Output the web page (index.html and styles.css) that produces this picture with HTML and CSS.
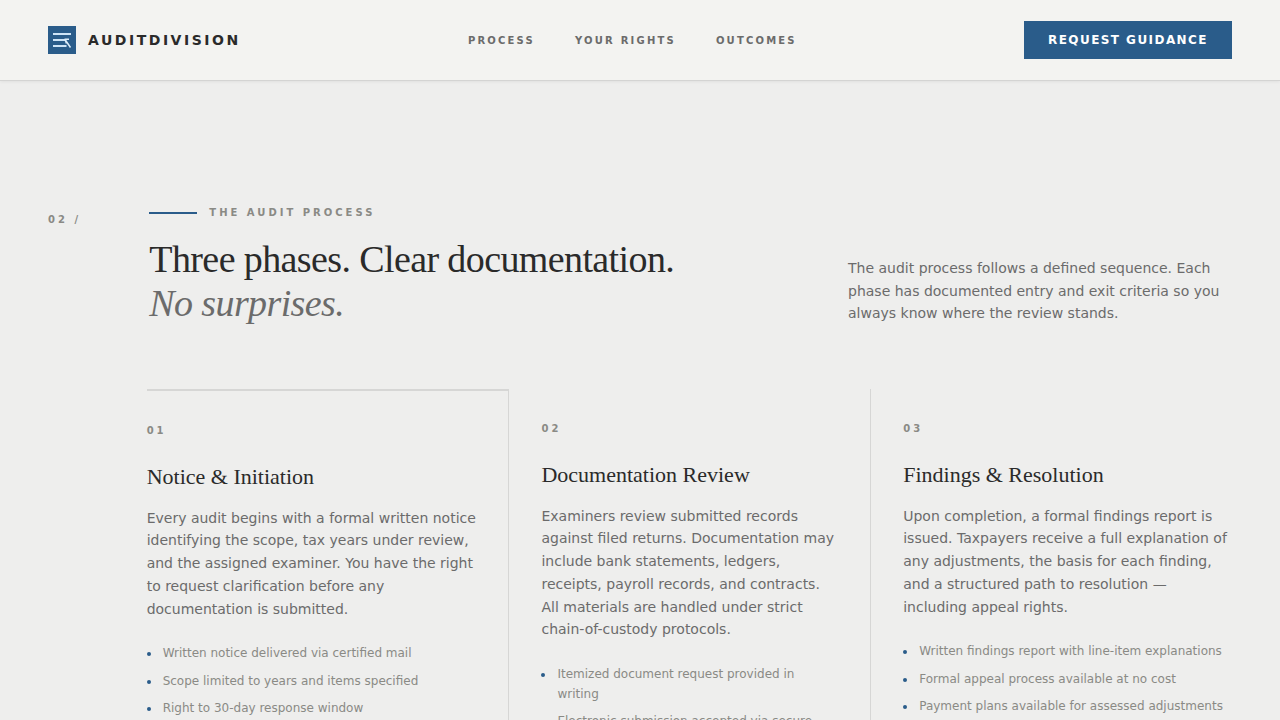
FILE: index.html
```html
<!DOCTYPE html>
<html lang="en">
<head>
    <meta charset="UTF-8">
    <meta name="viewport" content="width=device-width, initial-scale=1.0">
    <title>AuditDivision</title>
    <link rel="stylesheet" href="styles.css">
</head>
<body>
    <header class="site-header">
        <a class="logo" href="#">
            <svg class="logo-mark" viewBox="0 0 28 28" fill="none" aria-hidden="true">
                <rect width="28" height="28" fill="#2a5c8a"/>
                <path d="M5 8h18M5 14h12M5 20h13.5" stroke="#cfe4f6" stroke-width="1.8"/>
                <path d="M22.5 21.5L17 13.5M16.5 13.3H21M17 13.5L18.5 17.5" stroke="#dcecf9" stroke-width="1.5"/>
            </svg>
            <span class="logo-text">AUDITDIVISION</span>
        </a>
        <nav class="site-nav">
            <a href="#process">PROCESS</a>
            <a href="#rights">YOUR RIGHTS</a>
            <a href="#outcomes">OUTCOMES</a>
        </nav>
        <button class="btn" type="button">REQUEST GUIDANCE</button>
    </header>

    <main>
        <section class="process" id="process">
            <div class="process-head">
                <span class="section-num">02 /</span>
                <div class="process-title">
                    <div class="eyebrow">THE AUDIT PROCESS</div>
                    <h2>Three phases. Clear documentation.<br><em>No surprises.</em></h2>
                </div>
                <p class="process-intro">The audit process follows a defined sequence. Each phase has documented entry and exit criteria so you always know where the review stands.</p>
            </div>

            <div class="phases">
                <article class="phase phase-active">
                    <div class="phase-num">01</div>
                    <h3>Notice &amp; Initiation</h3>
                    <p>Every audit begins with a formal written notice identifying the scope, tax years under review, and the assigned examiner. You have the right to request clarification before any documentation is submitted.</p>
                    <ul>
                        <li>Written notice delivered via certified mail</li>
                        <li>Scope limited to years and items specified</li>
                        <li>Right to 30-day response window</li>
                    </ul>
                </article>
                <article class="phase">
                    <div class="phase-num">02</div>
                    <h3>Documentation Review</h3>
                    <p>Examiners review submitted records against filed returns. Documentation may include bank statements, ledgers, receipts, payroll records, and contracts. All materials are handled under strict chain-of-custody protocols.</p>
                    <ul>
                        <li>Itemized document request provided in writing</li>
                        <li>Electronic submission accepted via secure</li>
                    </ul>
                </article>
                <article class="phase">
                    <div class="phase-num">03</div>
                    <h3>Findings &amp; Resolution</h3>
                    <p>Upon completion, a formal findings report is issued. Taxpayers receive a full explanation of any adjustments, the basis for each finding, and a structured path to resolution — including appeal rights.</p>
                    <ul>
                        <li>Written findings report with line-item explanations</li>
                        <li>Formal appeal process available at no cost</li>
                        <li>Payment plans available for assessed adjustments</li>
                    </ul>
                </article>
            </div>
        </section>
    </main>
</body>
</html>
```
FILE: styles.css
```css
*{
    margin: 0;
    padding: 0;
    box-sizing: border-box;
}
body{
    font-family: "DejaVu Sans", sans-serif;
    background: #eeeeed;
    color: #2a2a2a;
}
a{
    color: inherit;
    text-decoration: none;
}

/* header */
.site-header{
    display: flex;
    align-items: center;
    justify-content: space-between;
    min-height: 81px;
    padding: 0 48px;
    background: #f3f3f1;
    border-bottom: 1px solid #d4d4d3;
    box-shadow: 0 1px 3px rgba(0,0,0,0.06);
}
.logo{
    display: flex;
    align-items: center;
    gap: 12px;
}
.logo-mark{
    width: 28px;
    height: 28px;
}
.logo-text{
    font-size: 14px;
    font-weight: bold;
    letter-spacing: 0.18em;
}
.site-nav{
    display: flex;
    gap: 40px;
    font-size: 10px;
    font-weight: bold;
    letter-spacing: 0.22em;
    color: #6b6b6b;
}
.btn{
    padding: 12px 24px;
    border: 0;
    background: #2a5c8a;
    color: #fff;
    font-family: inherit;
    font-size: 12px;
    font-weight: bold;
    line-height: 14px;
    letter-spacing: 0.12em;
}

/* process section */
.process{
    padding: 124px 48px 128px;
}
.process-head{
    display: grid;
    grid-template-columns: repeat(12, 1fr);
    column-gap: 32px;
    margin-bottom: 64px;
}
.section-num,
.eyebrow,
.phase-num{
    font-size: 10px;
    font-weight: bold;
    line-height: 16px;
    color: #8a8a85;
}
.section-num{
    padding-top: 7px;
    letter-spacing: 0.3em;
    white-space: nowrap;
}
.process-title{
    grid-column: 2 / 8;
}
.eyebrow{
    display: flex;
    align-items: center;
    gap: 12px;
    margin-bottom: 16px;
    letter-spacing: 0.3em;
}
.eyebrow::before{
    content: '';
    width: 48px;
    height: 2px;
    background: #2a5c8a;
}
h2,
h3{
    font-family: "Liberation Serif", serif;
    font-weight: normal;
}
h2{
    font-size: 38px;
    line-height: 44px;
    letter-spacing: -0.016em;
}
h2 em{
    color: #6b6b6b;
}
.process-intro{
    grid-column: 8 / 13;
    justify-self: end;
    align-self: end;
    max-width: 384px;
}
.process-intro,
.phase p{
    font-size: 14px;
    line-height: 1.625;
    color: #6b6b6b;
}

/* phase columns */
.phases{
    display: grid;
    grid-template-columns: repeat(3, 1fr);
    margin-left: 8.333%;
}
.phase{
    padding: 32px;
    border-left: 1px solid #d6d6d5;
}
.phase:first-child{
    padding-left: 0;
    border-left: 0;
}
.phase:last-child{
    padding-right: 0;
}
.phase-active{
    border-top: 2px solid #d6d6d5;
}
.phase-num{
    margin-bottom: 24px;
    letter-spacing: 0.3em;
}
h3{
    margin-bottom: 16px;
    font-size: 22px;
    line-height: 1.25;
}
.phase ul{
    display: grid;
    gap: 8px;
    margin-top: 24px;
    list-style: none;
}
.phase li{
    display: flex;
    gap: 12px;
    font-size: 12px;
    line-height: 1.625;
    color: #8a8a85;
}
.phase li::before{
    content: '';
    flex: none;
    width: 4px;
    height: 4px;
    margin-top: 8px;
    border-radius: 50%;
    background: #2a5c8a;
}

@media screen and (max-width:900px) {
    .process-title,
    .process-intro{
        grid-column: 1 / -1;
        justify-self: start;
    }
    .phases{
        grid-template-columns: 1fr;
        margin-left: 0;
    }
    .phase{
        padding-left: 0;
        border-left: 0;
    }
}
```
